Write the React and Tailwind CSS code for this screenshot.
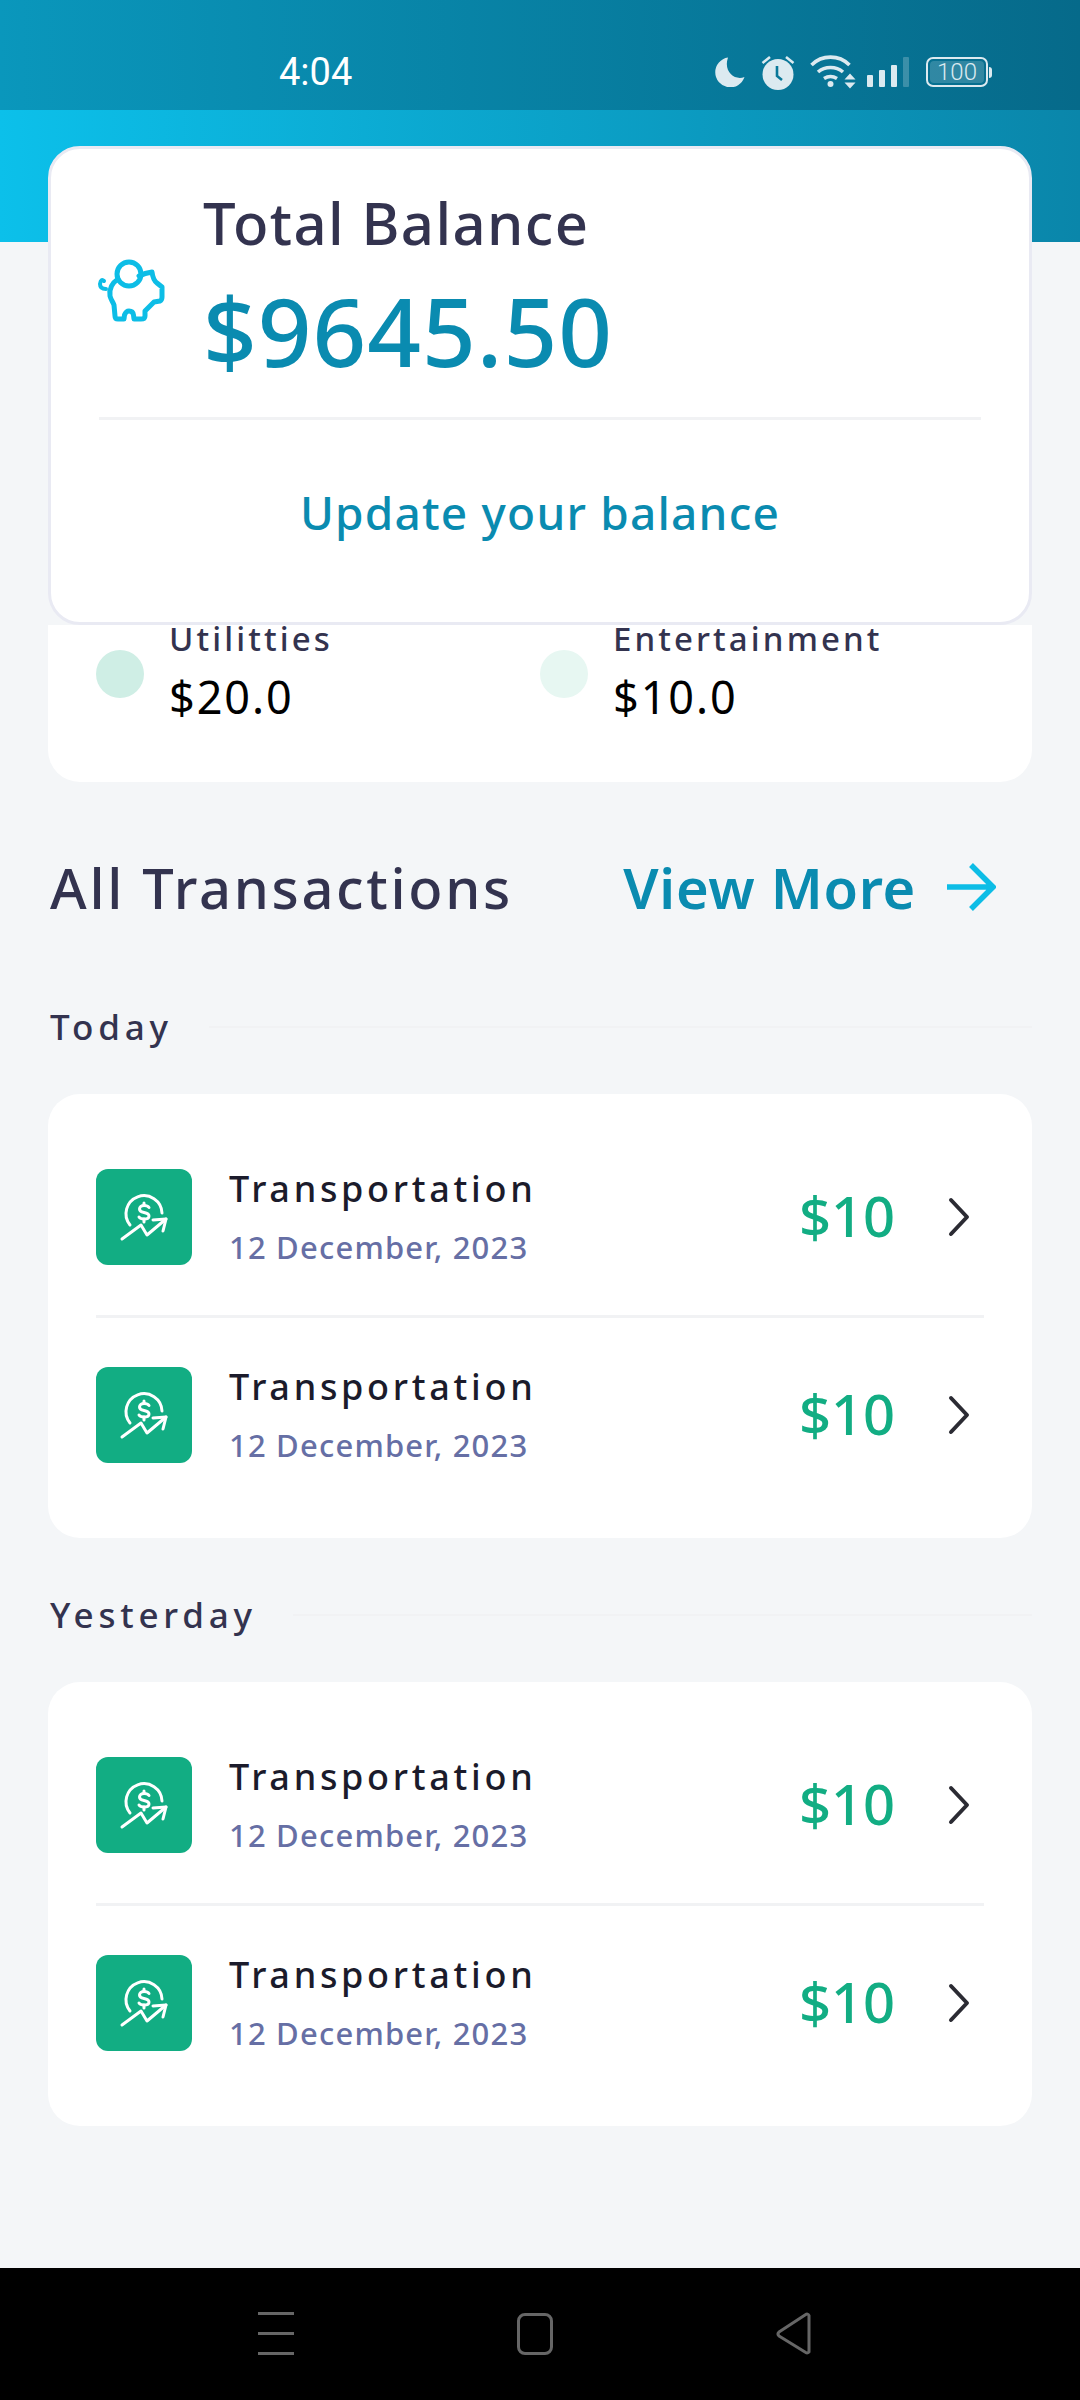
import React from "react";

const font = "font-['Noto_Sans',sans-serif]";

const StatusIcons = () => (
  <div className="flex items-center ml-auto mr-[88px] text-[#dceaf0]">
    <svg width="30" height="30" viewBox="0 0 30 30">
      <path d="M13 0.5 A15 15 0 1 0 29.5 20 C20 24 8 15 13 0.5Z" fill="#dceaf0" />
    </svg>
    <svg width="34" height="36" viewBox="0 0 34 36" className="ml-[16px]">
      <circle cx="17" cy="20.5" r="15.5" fill="#dceaf0" />
      <path d="M16 12v10l5 4" fill="none" stroke="#0a7899" strokeWidth="2.6" />
      <path d="M1.5 9L9 3M32.5 9L25 3" stroke="#dceaf0" strokeWidth="2.6" />
    </svg>
    <svg width="46" height="34" viewBox="0 0 46 34" className="ml-[15px]">
      <g fill="none" stroke="#dceaf0" strokeWidth="3.6">
        <path d="M1.5 10C12 -0.5 29 -0.5 39.5 10" />
        <path d="M8 17C15 11 26 11 33 17" />
        <path d="M14 23.5C18 21 23 21 27 23.5" />
      </g>
      <circle cx="20.5" cy="29" r="3" fill="#dceaf0" />
      <path d="M34.5 24.5L40 18.5L45.5 24.5ZM34.5 27.5L40 33.5L45.5 27.5Z" fill="#dceaf0" />
    </svg>
    <svg width="44" height="30" viewBox="0 0 44 30" className="ml-[11px]">
      <rect x="0" y="18" width="6" height="12" rx="1" fill="#dceaf0" />
      <rect x="12" y="13" width="6" height="17" rx="1" fill="#dceaf0" />
      <rect x="24" y="8" width="6" height="22" rx="1" fill="#dceaf0" />
      <rect x="36" y="0" width="6" height="30" rx="1" fill="#dceaf0" fillOpacity="0.25" />
    </svg>
    <div className="ml-[15px] flex items-center">
      <div className="w-[62px] h-[30px] rounded-[7px] border-2 border-[#dceaf0] p-[2px]">
        <div className="w-full h-full rounded-[4px] bg-[#dceaf0]/20 flex items-center justify-center text-[24px] leading-none font-['Roboto',sans-serif] font-light">
          100
        </div>
      </div>
      <div className="w-[3px] h-[11px] ml-[1px] rounded-r-sm bg-[#dceaf0]" />
    </div>
  </div>
);

const PiggyIcon = () => (
  <svg width="100" height="80" viewBox="0 0 100 80" className="shrink-0 ml-[-20px] mr-[-1px] mt-[96px]">
    <g fill="none" stroke="#0dbde6" strokeWidth="5" strokeLinecap="round" strokeLinejoin="round">
      <circle cx="50" cy="29" r="12" />
      <path d="M39 34C33 38 30 44 31 51C32 55 34 57 35 60L36 71Q36 74 39 74L45 74L45.5 70Q47 66 50 66Q54 66 54.5 70L55 74L62 74Q66 74 66 71L66 66L72 60L75 57L81 56Q83 55 83 52L83 42L78 38Q74 35 73 27Q66 28 60 31" />
      <path d="M25 36Q22 33 21 39Q21 44 27 44" strokeWidth="4" />
    </g>
  </svg>
);

const Chevron = () => (
  <svg width="24" height="40" viewBox="0 0 24 40" className="shrink-0">
    <path d="M4 3L20 20L4 37" fill="none" stroke="#2b2b33" strokeWidth="4" strokeLinecap="round" strokeLinejoin="round" />
  </svg>
);

const MoneyIcon = () => (
  <svg width="96" height="96" viewBox="0 0 96 96">
    <g fill="none" stroke="#fff" strokeWidth="3" strokeLinecap="round" strokeLinejoin="round">
      <path d="M34 56A18 18 0 1 1 66 44" />
      <path d="M53 38.5C52 37 50 36.5 48 36.5C45.5 36.5 43.5 38 43.5 40C43.5 42 45.5 43 48 43.5C50.5 44 53 45 53 47C53 49 50.5 50 48 50C46 50 44 49.5 43 48" />
      <path d="M48 34V36.5M48 50V53" />
      <path d="M26 70L45 56L51 66L70 50" />
      <path d="M57 51L70 50L67 62" />
    </g>
  </svg>
);

const Row = () => (
  <div className="flex items-center h-[96px]">
    <div className="w-[96px] h-[96px] rounded-[12px] bg-[#12ad83] shrink-0">
      <MoneyIcon />
    </div>
    <div className="ml-[37px]">
      <div className="text-[36px] leading-[44px] font-medium tracking-[3.7px] text-[#1b1b2b] h-[58px]">Transportation</div>
      <div className="text-[31px] leading-[44px] tracking-[1.2px] font-medium text-[#666fa5] mb-[-2px]">12 December, 2023</div>
    </div>
    <div className="ml-auto text-[56px] leading-none font-medium text-[#12ad83] mt-[-4px]">$10</div>
    <div className="ml-[52px] mr-[13px]">
      <Chevron />
    </div>
  </div>
);

const DayGroup = ({ label }) => (
  <section className="px-[48px]">
    <div className="flex items-center gap-[36px] h-[40px] pl-[2px]">
      <h3 className="text-[35px] leading-[40px] font-medium tracking-[4.8px] text-[#33334f]">{label}</h3>
      <div className="flex-1 h-[2px] bg-[#f1f2f4]" />
    </div>
    <div className="mt-[47px] rounded-[32px] bg-white px-[48px] pt-[75px] pb-[75px]">
      <Row />
      <div className="h-[3px] bg-[#f1f2f4] mt-[50px] mb-[49px]" />
      <Row />
    </div>
  </section>
);

const Budget = ({ name, value, dot, cls }) => (
  <div className={`flex items-start ${cls}`}>
    <div className={`w-[48px] h-[48px] rounded-full mt-[25px] shrink-0 ${dot}`} />
    <div className="ml-[25px]">
      <div className="text-[33px] leading-[30px] font-medium tracking-[3.1px] text-[#33334f] h-[48px] mt-[-1px]">{name}</div>
      <div className="text-[45px] leading-[50px] tracking-[1.9px] text-black">{value}</div>
    </div>
  </div>
);

export default function App() {
  return (
    <div className={`${font} w-[1080px] h-[2400px] bg-[#f4f6f8] flex flex-col overflow-hidden`}>
      <div className="h-[110px] shrink-0 flex items-center pt-[34px] bg-gradient-to-r from-[#0a97bc] to-[#066a8a]">
        <span className="ml-[279px] text-[38px] leading-none text-white font-['Roboto',sans-serif]">4:04</span>
        <StatusIcons />
      </div>
      <div className="h-[132px] shrink-0 bg-gradient-to-r from-[#0cc0ea] to-[#0a86aa]" />

      <div className="relative z-10 mx-[48px] mt-[-96px] h-[479px] shrink-0 rounded-[32px] border-[3px] border-[#e9eaf3] bg-white px-[48px]">
        <div className="flex items-start h-[271px] border-b-[3px] border-[#f1f2f4]">
          <PiggyIcon />
          <div className="ml-[25px] pt-[44px]">
            <div className="text-[58px] leading-[60px] font-medium tracking-[1.4px] text-[#33334f]">Total Balance</div>
            <div className="text-[94px] leading-[100px] mt-[28px] font-medium tracking-[1px] text-[#0a8bb0]">$9645.50</div>
          </div>
        </div>
        <div className="h-[189px] flex items-center justify-center text-[46px] font-medium tracking-[1.2px] text-[#0a8bb0] pb-[4px]">
          Update your balance
        </div>
      </div>

      <div className="mx-[48px] h-[157px] shrink-0 rounded-b-[32px] bg-white flex pl-[48px]">
        <Budget name="Utilitties" value="$20.0" dot="bg-[#cfeee5]" cls="w-[444px]" />
        <Budget name="Entertainment" value="$10.0" dot="bg-[#e7f7f2]" cls="" />
      </div>

      <div className="flex items-center justify-between pl-[50px] pr-[82px] mt-[75px] h-[60px]">
        <h2 className="text-[56px] leading-none font-medium tracking-[2.7px] text-[#33334f]">All Transactions</h2>
        <div className="flex items-center">
          <span className="text-[56px] leading-none font-semibold tracking-[0.7px] text-[#0a8bb0]">View More</span>
          <svg width="50" height="50" viewBox="0 0 50 50" className="ml-[30px] mr-[2px]">
            <path d="M1 25H46M25 3L47 25L25 47" fill="none" stroke="#0dbde6" strokeWidth="5.5" />
          </svg>
        </div>
      </div>

      <div className="mt-[90px]">
        <DayGroup label="Today" />
      </div>
      <div className="mt-[57px]">
        <DayGroup label="Yesterday" />
      </div>

      <div className="mt-auto h-[132px] shrink-0 bg-black flex items-center justify-between pl-[258px] pr-[268px] pb-[1px]">
        <div className="w-[36px] flex flex-col gap-[17px]">
          <div className="h-[3px] bg-[#666]" />
          <div className="h-[3px] bg-[#666]" />
          <div className="h-[3px] bg-[#666]" />
        </div>
        <div className="w-[36px] h-[42px] rounded-[8px] border-[3px] border-[#666]" />
        <svg width="36" height="44" viewBox="0 0 36 44">
          <path d="M33 3.5V40Q31 42 29 40L3 24Q1 22 3 20L29 3Q32 1 33 3.5Z" fill="none" stroke="#666" strokeWidth="3" strokeLinejoin="round" />
        </svg>
      </div>
    </div>
  );
}
